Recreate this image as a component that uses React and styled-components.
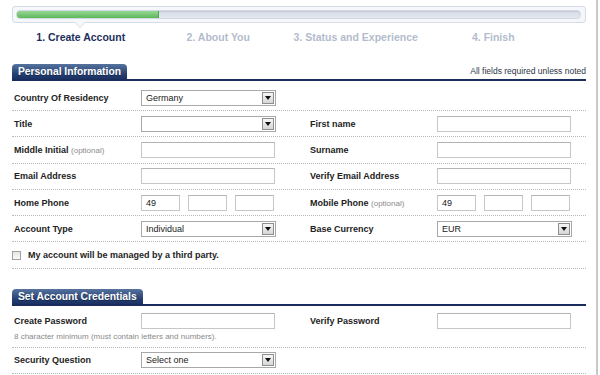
import React from "react";
import styled, { createGlobalStyle } from "styled-components";

const Global = createGlobalStyle`
  html, body { margin: 0; padding: 0; background: #fff; }
  body { font-family: "Liberation Sans", Arial, sans-serif; }
  * { box-sizing: border-box; }
`;

const Page = styled.div`
  width: 598px;
  min-height: 375px;
  padding: 6px 10px 0 12px;
  border-right: 2px solid #c9c9c9;
`;

const ProgressBox = styled.div`
  position: relative;
  height: 17px;
  border: 1px solid #d5dbe7;
  border-radius: 3px;
  background: #f5f7fb;
  padding: 3px 4px 3px 3px;
  &::before, &::after {
    content: "";
    position: absolute;
    left: 62px;
    width: 0; height: 0;
    border-left: 5px solid transparent;
    border-right: 5px solid transparent;
  }
  &::before { bottom: -6px; border-top: 5px solid #d5dbe7; }
  &::after { bottom: -5px; border-top: 5px solid #f5f7fb; }
`;

const Track = styled.div`
  height: 9px;
  border-radius: 4px;
  background: linear-gradient(#d5dae5, #e4e8ef);
  box-shadow: inset 0 1px 1px rgba(0,0,0,0.08);
  border: 1px solid #d2d8e3;
  overflow: hidden;
`;

const Fill = styled.div`
  height: 100%;
  width: ${p => p.$w}px;
  background: linear-gradient(#95d892, #5fb75c);
  border-right: 1px solid #54a452;
`;

const Steps = styled.div`
  display: grid;
  grid-template-columns: repeat(4, 137.5px);
  margin-top: 7px;
  height: 14px;
`;

const Step = styled.div`
  text-align: center;
  font-size: 10.5px;
  font-weight: bold;
  line-height: 14px;
  color: ${p => (p.$active ? "#1d2f5c" : "#b3bccc")};
`;

const SectionHeader = styled.div`
  display: flex;
  justify-content: space-between;
  align-items: flex-end;
  margin-top: ${p => p.$mt}px;
  border-bottom: 2px solid #1b2d5c;
`;

const Tab = styled.div`
  height: 15px;
  line-height: 15px;
  padding: 0 6px;
  border-radius: 4px 4px 0 0;
  background: linear-gradient(#56739f, #233e70 70%, #1b3162);
  color: #fff;
  font-size: 10.3px;
  font-weight: bold;
  text-shadow: 0 1px 0 rgba(0,0,0,0.35);
`;

const Note = styled.div`
  font-size: 8.5px;
  color: #2d3547;
  padding-bottom: 3px;
`;

const Row = styled.div`
  display: grid;
  grid-template-columns: 127px 169px 127px 1fr;
  align-items: center;
  align-content: ${p => (p.$top ? "start" : "center")};
  height: ${p => p.$h}px;
  padding: ${p => p.$pt || 0}px 0 0 2px;
  border-bottom: 1px dotted #b8b8b8;
`;

const Label = styled.div`
  font-size: 9px;
  font-weight: bold;
  color: #232323;
  white-space: nowrap;
`;

const Optional = styled.span`
  font-size: 8px;
  font-weight: normal;
  color: #8c8c8c;
`;

const Input = styled.div`
  width: ${p => p.$w || 134}px;
  height: 16px;
  border: 1px solid #c6c6c6;
  border-top-color: #b4b4b4;
  background: #fff;
  font-size: 9px;
  line-height: 14px;
  padding: 0 4px;
  color: #222;
`;

const PhoneGroup = styled.div`
  display: flex;
  gap: 8px;
`;

const SelectBox = styled.div`
  width: 135px;
  height: 16px;
  display: flex;
  align-items: center;
  border: 1px solid #a8a8a8;
  background: #fff;
  font-size: 9px;
  color: #222;
  padding-left: 4px;
`;

const SelectText = styled.span`
  flex: 1;
`;

const Arrow = styled.div`
  width: 12px;
  height: 12px;
  margin-right: 1px;
  border: 1px solid #8e8e8e;
  background: linear-gradient(#f6f6f6, #d6d6d6);
  display: flex;
  align-items: center;
  justify-content: center;
  &::after {
    content: "";
    border-left: 3px solid transparent;
    border-right: 3px solid transparent;
    border-top: 4px solid #111;
  }
`;

const CheckRow = styled.div`
  display: flex;
  align-items: center;
  gap: 7px;
  height: 26.3px;
  border-bottom: 1px dotted #b8b8b8;
`;

const Checkbox = styled.div`
  width: 9px;
  height: 9px;
  border: 1px solid #a0a0a0;
  background: linear-gradient(#e6e6e6, #fafafa);
`;

const Hint = styled.div`
  grid-column: 1 / -1;
  margin-top: 3px;
  font-size: 8px;
  line-height: 10px;
  color: #8a8a8a;
`;

const Select = ({ value = "" }) => (
  <SelectBox>
    <SelectText>{value}</SelectText>
    <Arrow />
  </SelectBox>
);

const Phone = ({ code }) => (
  <PhoneGroup>
    <Input $w={39}>{code}</Input>
    <Input $w={39} />
    <Input $w={39} />
  </PhoneGroup>
);

export default function App() {
  return (
    <>
      <Global />
      <Page>
        <ProgressBox>
          <Track>
            <Fill $w={142} />
          </Track>
        </ProgressBox>
        <Steps>
          <Step $active>1. Create Account</Step>
          <Step>2. About You</Step>
          <Step>3. Status and Experience</Step>
          <Step>4. Finish</Step>
        </Steps>

        <SectionHeader $mt={20}>
          <Tab>Personal Information</Tab>
          <Note>All fields required unless noted</Note>
        </SectionHeader>

        <Row $h={30} $pt={4}>
          <Label>Country Of Residency</Label>
          <Select value="Germany" />
        </Row>
        <Row $h={26.3}>
          <Label>Title</Label>
          <Select />
          <Label>First name</Label>
          <Input />
        </Row>
        <Row $h={26.3}>
          <Label>
            Middle Initial <Optional>(optional)</Optional>
          </Label>
          <Input />
          <Label>Surname</Label>
          <Input />
        </Row>
        <Row $h={26.3}>
          <Label>Email Address</Label>
          <Input />
          <Label>Verify Email Address</Label>
          <Input />
        </Row>
        <Row $h={26.3}>
          <Label>Home Phone</Label>
          <Phone code="49" />
          <Label>
            Mobile Phone <Optional>(optional)</Optional>
          </Label>
          <Phone code="49" />
        </Row>
        <Row $h={26.3}>
          <Label>Account Type</Label>
          <Select value="Individual" />
          <Label>Base Currency</Label>
          <Select value="EUR" />
        </Row>
        <CheckRow>
          <Checkbox />
          <Label>My account will be managed by a third party.</Label>
        </CheckRow>

        <SectionHeader $mt={20}>
          <Tab>Set Account Credentials</Tab>
        </SectionHeader>

        <Row $h={42} $pt={7} $top>
          <Label>Create Password</Label>
          <Input />
          <Label>Verify Password</Label>
          <Input />
          <Hint>8 character minimum (must contain letters and numbers).</Hint>
        </Row>
        <Row $h={26.3}>
          <Label>Security Question</Label>
          <Select value="Select one" />
        </Row>
      </Page>
    </>
  );
}
